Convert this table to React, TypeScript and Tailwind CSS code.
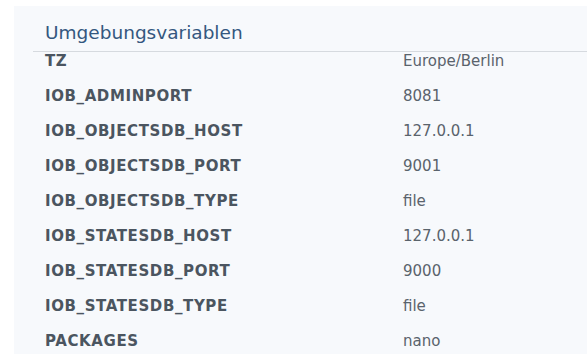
const envVars: [string, string][] = [
  ["TZ", "Europe/Berlin"],
  ["IOB_ADMINPORT", "8081"],
  ["IOB_OBJECTSDB_HOST", "127.0.0.1"],
  ["IOB_OBJECTSDB_PORT", "9001"],
  ["IOB_OBJECTSDB_TYPE", "file"],
  ["IOB_STATESDB_HOST", "127.0.0.1"],
  ["IOB_STATESDB_PORT", "9000"],
  ["IOB_STATESDB_TYPE", "file"],
  ["PACKAGES", "nano"],
];

export default function App() {
  return (
    <div
      className="h-[354px] w-[587px] overflow-hidden bg-white pl-[14px] pt-[6px]"
      style={{ fontFamily: '"DejaVu Sans", Verdana, sans-serif' }}
    >
      <div className="h-full bg-[#f7f9fc] pl-[19px]">
        <h2 className="pl-[12px] pt-[14px] text-[18.5px] leading-[26px] text-[#34577f]">
          Umgebungsvariablen
        </h2>
        <div className="mt-[5px] border-t border-[#d6dadf]">
          {envVars.map(([key, value]) => (
            <div key={key} className="flex h-[35px] pl-[12px] text-[15px] leading-[18px]">
              <div className="w-[358px] font-bold tracking-[0.6px] text-[#4b5560]">{key}</div>
              <div className="text-[#5a636c]">{value}</div>
            </div>
          ))}
        </div>
      </div>
    </div>
  );
}
